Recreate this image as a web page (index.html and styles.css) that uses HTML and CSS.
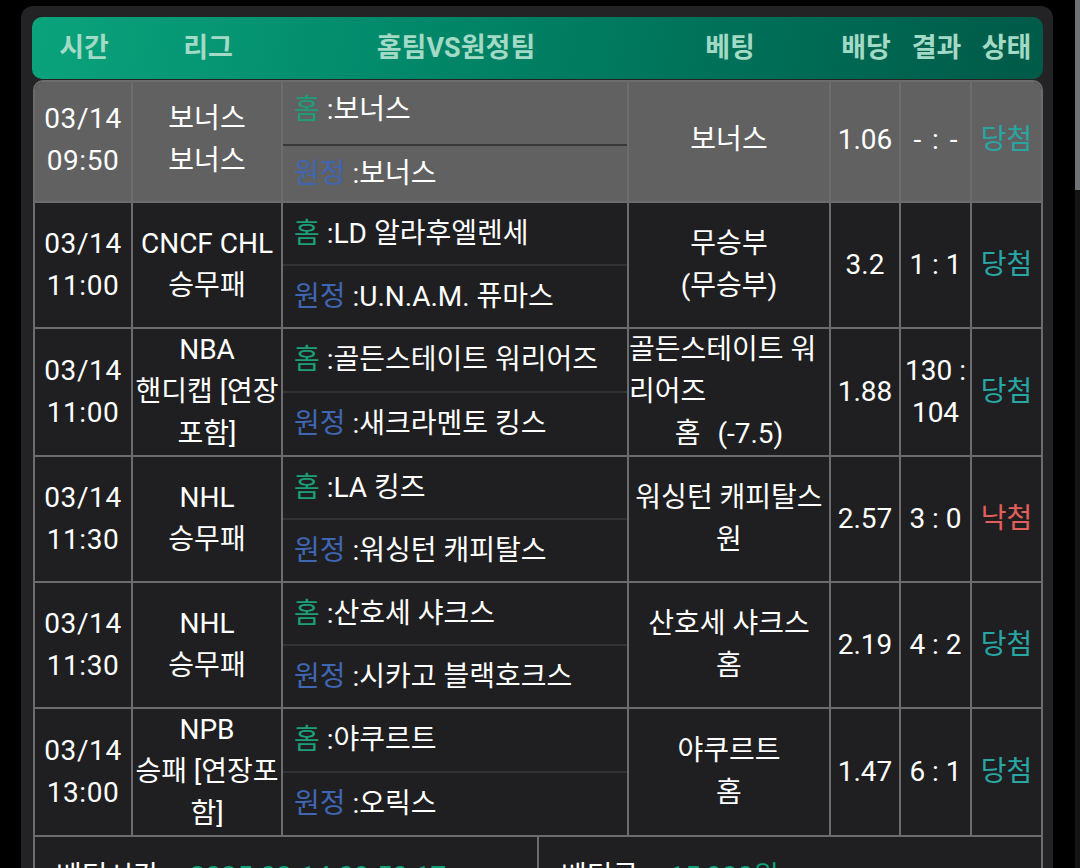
FILE: index.html
```html
<!DOCTYPE html>
<html lang="ko">
<head>
<meta charset="utf-8">
<title>베팅내역</title>
<link rel="stylesheet" href="styles.css">
</head>
<body>
<div class="scrollbar"><div class="thumb"></div></div>
<div class="panel">
  <div class="head">
    <div>시간</div><div>리그</div><div>홈팀VS원정팀</div><div>베팅</div><div>배당</div><div>결과</div><div>상태</div>
  </div>
  <div class="tbl">
    <div class="row bonus">
      <div class="cell time">03/14<br>09:50</div>
      <div class="cell">보너스<br>보너스</div>
      <div class="cell teams">
        <div class="side"><span class="home">홈</span>&nbsp;:보너스</div>
        <div class="side"><span class="away">원정</span>&nbsp;:보너스</div>
      </div>
      <div class="cell bet">보너스</div>
      <div class="cell">1.06</div>
      <div class="cell"><span class="dash">- : -</span></div>
      <div class="cell win">당첨</div>
    </div>
    <div class="row">
      <div class="cell time">03/14<br>11:00</div>
      <div class="cell">CNCF CHL<br>승무패</div>
      <div class="cell teams">
        <div class="side"><span class="home">홈</span>&nbsp;:LD 알라후엘렌세</div>
        <div class="side"><span class="away">원정</span>&nbsp;:U.N.A.M. 퓨마스</div>
      </div>
      <div class="cell bet">무승부<br>(무승부)</div>
      <div class="cell">3.2</div>
      <div class="cell">1 : 1</div>
      <div class="cell win">당첨</div>
    </div>
    <div class="row">
      <div class="cell time">03/14<br>11:00</div>
      <div class="cell">NBA<br>핸디캡 [연장포함]</div>
      <div class="cell teams">
        <div class="side"><span class="home">홈</span>&nbsp;:골든스테이트 워리어즈</div>
        <div class="side"><span class="away">원정</span>&nbsp;:새크라멘토 킹스</div>
      </div>
      <div class="cell bet"><div><span class="pick">골든스테이트 워리어즈</span><br>홈<span class="gap"></span>(-7.5)</div></div>
      <div class="cell">1.88</div>
      <div class="cell">130 : 104</div>
      <div class="cell win">당첨</div>
    </div>
    <div class="row">
      <div class="cell time">03/14<br>11:30</div>
      <div class="cell">NHL<br>승무패</div>
      <div class="cell teams">
        <div class="side"><span class="home">홈</span>&nbsp;:LA 킹즈</div>
        <div class="side"><span class="away">원정</span>&nbsp;:워싱턴 캐피탈스</div>
      </div>
      <div class="cell bet">워싱턴 캐피탈스<br>원</div>
      <div class="cell">2.57</div>
      <div class="cell">3 : 0</div>
      <div class="cell lose">낙첨</div>
    </div>
    <div class="row">
      <div class="cell time">03/14<br>11:30</div>
      <div class="cell">NHL<br>승무패</div>
      <div class="cell teams">
        <div class="side"><span class="home">홈</span>&nbsp;:산호세 샤크스</div>
        <div class="side"><span class="away">원정</span>&nbsp;:시카고 블랙호크스</div>
      </div>
      <div class="cell bet">산호세 샤크스<br>홈</div>
      <div class="cell">2.19</div>
      <div class="cell">4 : 2</div>
      <div class="cell win">당첨</div>
    </div>
    <div class="row">
      <div class="cell time">03/14<br>13:00</div>
      <div class="cell">NPB<br>승패 [연장포함]</div>
      <div class="cell teams">
        <div class="side"><span class="home">홈</span>&nbsp;:야쿠르트</div>
        <div class="side"><span class="away">원정</span>&nbsp;:오릭스</div>
      </div>
      <div class="cell bet">야쿠르트<br>홈</div>
      <div class="cell">1.47</div>
      <div class="cell">6 : 1</div>
      <div class="cell win">당첨</div>
    </div>
    <div class="foot">
      <div class="fcell"><span class="lbl">베팅시간</span><span class="sep">:</span><span class="val">2025-03-14 09:50:17</span></div>
      <div class="fcell"><span class="lbl">베팅금</span><span class="sep">:</span><span class="val">15,000원</span></div>
    </div>
  </div>
</div>
</body>
</html>
```

FILE: styles.css
```css
html, body {
  margin: 0;
  padding: 0;
  overflow: hidden;
  background: #000;
}

body {
  font-family: Roboto, "Noto Sans CJK KR", sans-serif;
  color: #fff;
  width: 1080px;
  height: 868px;
  position: relative;
}

.scrollbar {
  position: absolute;
  top: 0;
  right: 0;
  width: 5px;
  height: 868px;
  background: #141414;
}

.thumb {
  height: 190px;
  background: #6f7378;
}

.panel {
  margin: 6px 0 0 21px;
  width: 1032px;
  box-sizing: border-box;
  padding: 11px 10px 0 11px;
  background: #232325;
  border-radius: 12px 12px 0 0;
}

.head {
  height: 62px;
  box-sizing: border-box;
  border-radius: 10px;
  background: linear-gradient(100deg, #0aa37c 0%, #028a6b 35%, #00735a 65%, #005a48 100%);
  display: grid;
  grid-template-columns: 98px 150px 346px 202px 70px 71px 69px;
  padding: 0 0 6px 3px;
  align-items: center;
  text-align: center;
  font-weight: 700;
  font-size: 27px;
  color: #a2dac6;
}

.tbl {
  margin: 1px 0 0 1px;
  border: 2px solid #6c6c6c;
  border-bottom: none;
  border-radius: 10px 10px 0 0;
  overflow: hidden;
}

.row {
  display: grid;
  grid-template-columns: 98px 150px 346px 202px 70px 71px 69px;
  background: #1f1f21;
  border-bottom: 2px solid #6c6c6c;
  font-size: 28px;
  line-height: 42px;
}

.row.bonus {
  background: #616161;
  height: 119px;
}

.cell {
  box-sizing: border-box;
  border-right: 2px solid #6c6c6c;
  display: flex;
  align-items: center;
  justify-content: center;
  text-align: center;
}

.bonus .cell {
  padding-bottom: 3px;
}

.cell:last-child {
  border-right: none;
}

.time {
  letter-spacing: 0.6px;
}

.dash {
  word-spacing: 4px;
}

.gap {
  display: inline-block;
  width: 17px;
}

.teams {
  flex-direction: column;
  align-items: stretch;
  justify-content: stretch;
  text-align: left;
}

.bonus .teams {
  padding-bottom: 0;
}

.side {
  flex: 1;
  min-height: 61px;
  display: flex;
  align-items: center;
  padding-left: 11px;
  white-space: nowrap;
}

.side + .side {
  border-top: 2px solid #323234;
}

.bonus .side {
  min-height: 0;
  box-sizing: border-box;
}

.bonus .side:first-child {
  flex: 0 0 62px;
  padding-bottom: 6px;
}

.bonus .side + .side {
  border-top-color: #393939;
}

.home {
  color: #1c9e78;
}

.away {
  color: #3f66b3;
}

.pick {
  display: inline-block;
  text-align: left;
}

.win {
  color: #27a6a4;
}

.lose {
  color: #e45f5b;
}

.foot {
  display: grid;
  grid-template-columns: 504px 502px;
  background: #1f1f21;
  font-size: 28px;
  line-height: 42px;
}

.fcell {
  box-sizing: border-box;
  padding: 19px 0 0 21px;
  height: 80px;
  white-space: nowrap;
}

.fcell:first-child {
  border-right: 2px solid #6c6c6c;
}

.fcell:last-child {
  padding-left: 22px;
}

.sep {
  margin: 0 12px;
}

.val {
  color: #10a07a;
}
```
